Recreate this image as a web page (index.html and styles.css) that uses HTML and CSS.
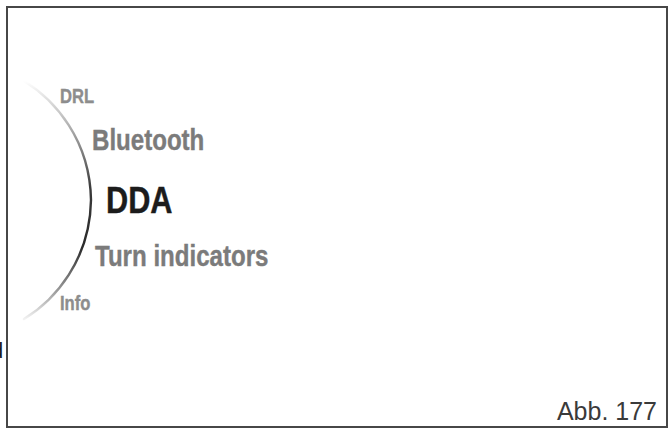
FILE: index.html
```html
<!DOCTYPE html>
<html lang="de">
<head>
  <meta charset="UTF-8">
  <meta name="viewport" content="width=device-width, initial-scale=1.0">
  <title>Abb. 177 - Menü</title>
  <link rel="stylesheet" href="styles.css">
</head>
<body>
  <div class="page">
    <!-- Randtext der Nachbarspalte -->
    <div class="gutter"><span>d</span></div>

    <div class="figure">
      <div class="dial">
        <svg class="arc" width="100" height="260" viewBox="0 0 100 260">
          <defs>
            <linearGradient id="arcFade" x1="0" y1="0" x2="0" y2="1">
              <stop offset="0" stop-color="#ffffff"/>
              <stop offset="0.18" stop-color="#b5b5b5"/>
              <stop offset="0.45" stop-color="#3a3a3a"/>
              <stop offset="0.7" stop-color="#2a2a2a"/>
              <stop offset="0.88" stop-color="#9a9a9a"/>
              <stop offset="1" stop-color="#f2f2f2"/>
            </linearGradient>
          </defs>
          <path d="M 16 11 C 47 30, 82 70, 83 130 C 82 190, 47 230, 16 249"
                fill="none" stroke="url(#arcFade)" stroke-width="2.4" stroke-linecap="round"/>
        </svg>

        <ul class="menu">
          <li class="item far drl"><span>DRL</span></li>
          <li class="item near bt"><span>Bluetooth</span></li>
          <li class="item active"><span>DDA</span></li>
          <li class="item near turn"><span>Turn indicators</span></li>
          <li class="item far info"><span>Info</span></li>
        </ul>
      </div>

      <div class="caption">Abb. 177</div>
    </div>
  </div>
</body>
</html>
```

FILE: styles.css
```css
* {
  margin: 0;
  padding: 0;
  box-sizing: border-box;
}

body {
  background: #fff;
  color: #222;
  font-family: 'Liberation Sans', Arial, sans-serif;
  overflow: hidden;
}

.page {
  display: flex;
  padding-top: 6px;
}

.gutter {
  width: 6px;
  padding-top: 334px;
  font-size: 22px;
  line-height: 1;
  color: #1a1a1a;
}

.gutter span {
  display: block;
  margin-left: -9px;
}

.figure {
  width: 662px;
  height: 422px;
  border: 2px solid #474747;
  display: flex;
  flex-direction: column;
}

.dial {
  display: grid;
  margin-top: 62px;
}

.arc,
.menu {
  grid-area: 1 / 1;
}

.menu {
  list-style: none;
  padding-top: 16px;
  font-family: 'Liberation Sans', Arial, sans-serif;
  font-weight: bold;
  line-height: 1;
  white-space: nowrap;
}

.item {
  display: block;
}

/* no narrow face installed: squeeze the bold face to a condensed width */
.item span {
  display: inline-block;
  transform: scaleX(0.83);
  transform-origin: 0 50%;
  -webkit-text-stroke: 0.4px currentColor;
}

.far {
  font-size: 20px;
  color: #8d8d8d;
}

.near {
  font-size: 29px;
  color: #7b7b7b;
}

.active {
  font-size: 37px;
  color: #1c1c1c;
  margin-top: 27px;
  margin-left: 98px;
}

.drl {
  margin-left: 52px;
}

.bt {
  margin-top: 20px;
  margin-left: 84px;
}

.turn {
  margin-top: 23px;
  margin-left: 87px;
}

.info {
  margin-top: 22px;
  margin-left: 52px;
}

.caption {
  margin-top: auto;
  align-self: flex-end;
  padding: 0 9px 2px 0;
  font-size: 25px;
  line-height: 1;
  color: #3a3a3a;
}
```
